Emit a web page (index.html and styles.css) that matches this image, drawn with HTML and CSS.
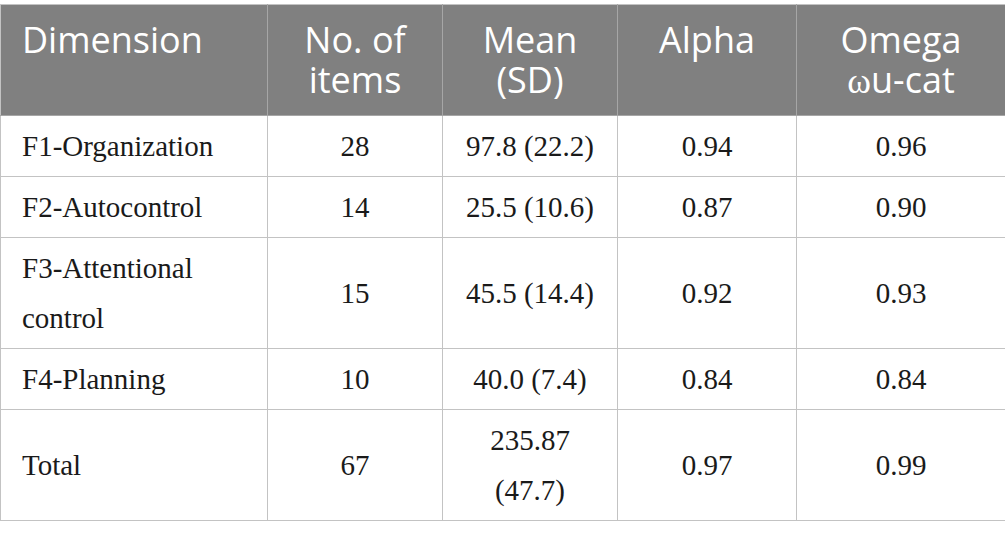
FILE: index.html
```html
<!DOCTYPE html>
<html lang="en">
<head>
<meta charset="utf-8">
<title>Table</title>
<link rel="stylesheet" href="styles.css">
</head>
<body>
<table class="data">
  <colgroup>
    <col class="c1"><col class="c2"><col class="c3"><col class="c4"><col class="c5">
  </colgroup>
  <thead>
    <tr>
      <th class="left">Dimension</th>
      <th>No. of<br>items</th>
      <th>Mean<br>(SD)</th>
      <th>Alpha</th>
      <th>Omega<br><span class="greek">ω</span>u-cat</th>
    </tr>
  </thead>
  <tbody>
    <tr><td class="left">F1-Organization</td><td>28</td><td>97.8 (22.2)</td><td>0.94</td><td>0.96</td></tr>
    <tr><td class="left">F2-Autocontrol</td><td>14</td><td>25.5 (10.6)</td><td>0.87</td><td>0.90</td></tr>
    <tr><td class="left">F3-Attentional<br>control</td><td>15</td><td>45.5 (14.4)</td><td>0.92</td><td>0.93</td></tr>
    <tr><td class="left">F4-Planning</td><td>10</td><td>40.0 (7.4)</td><td>0.84</td><td>0.84</td></tr>
    <tr><td class="left">Total</td><td>67</td><td>235.87<br>(47.7)</td><td>0.97</td><td>0.99</td></tr>
  </tbody>
</table>
</body>
</html>
```

FILE: styles.css
```css
html, body {
  margin: 0;
  padding: 0;
  background: #ffffff;
}

body {
  padding-top: 4px;
}

.data {
  border-collapse: collapse;
  table-layout: fixed;
  width: 1005px;
}

.c1 { width: 267px; }
.c2 { width: 175px; }
.c3 { width: 175px; }
.c4 { width: 179px; }
.c5 { width: 209px; }

.data th,
.data td {
  border: 1px solid #c3c3c3;
  text-align: center;
}

.data th {
  background: #808080;
  color: #ffffff;
  font-family: "Open Sans", "Noto Sans", sans-serif;
  font-weight: 400;
  font-size: 36px;
  line-height: 40px;
  padding: 15px 8px 14px;
  vertical-align: top;
  border-color: #a6a6a6;
  border-top-color: #c3c3c3;
}

.data th:first-child { border-left-color: #c3c3c3; }
.data th:last-child { border-right-color: #c3c3c3; }

.greek {
  font-family: "Liberation Serif", "DejaVu Serif", serif;
}

.data td {
  font-family: "Liberation Serif", "Times New Roman", serif;
  font-size: 29px;
  line-height: 50px;
  color: #1a1a1a;
  padding: 5px 8px;
  vertical-align: middle;
}

.data .left {
  text-align: left;
  padding-left: 21px;
}
```
